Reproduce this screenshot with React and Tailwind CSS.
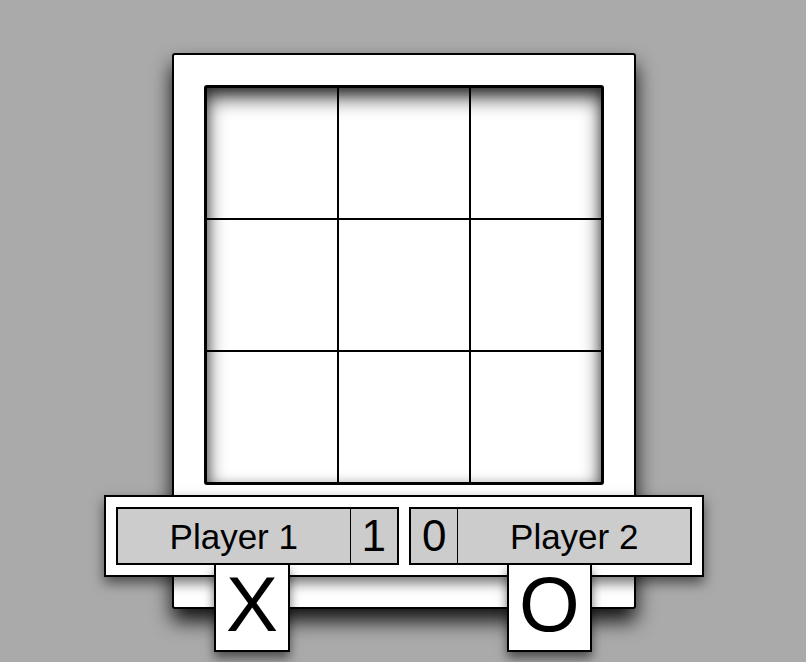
import React from 'react';

const cells = Array.from({ length: 9 });

function PlayerBox({ name, score, mark, scoreFirst }) {
  const scoreCell = (
    <div
      className={
        'flex items-center px-[11px] text-[44px] leading-none border-black ' +
        (scoreFirst ? 'border-r' : 'border-l')
      }
    >
      {score}
    </div>
  );

  return (
    <div className="relative flex-1">
      <div className="relative z-10 flex h-full border-2 border-black bg-[#cccccc]">
        {scoreFirst && scoreCell}
        <div className="flex flex-1 items-center justify-center text-[35px] leading-none">{name}</div>
        {!scoreFirst && scoreCell}
      </div>
      {/* mark tile hangs under the box */}
      <div className="absolute top-full left-[98px] border-2 border-t-0 border-black bg-white px-[10px] pb-[7px] text-[78px] leading-none shadow-[0_6px_10px_rgba(0,0,0,0.55)]">
        {mark}
      </div>
    </div>
  );
}

export default function App() {
  return (
    <div
      className="min-h-screen bg-[#aaaaaa] flex justify-center pl-[2px] pt-[53px] text-black"
      style={{ fontFamily: '"Liberation Sans", Arial, sans-serif' }}
    >
      <div className="w-[464px] h-fit rounded-[3px] border-2 border-black bg-white p-[30px] shadow-[0_12px_20px_rgba(0,0,0,0.9)]">
        {/* board */}
        <div className="grid grid-cols-3 w-[400px] h-[400px] rounded-[3px] border-2 border-black bg-white shadow-[inset_0_10px_20px_rgba(0,0,0,0.8),inset_0_4px_12px_rgba(0,0,0,0.35)]">
          {cells.map((_, i) => (
            <div key={i} className="w-[132px] h-[132px] border border-black" />
          ))}
        </div>

        {/* score bar */}
        <div className="relative mt-[10px] -mx-[100px] flex h-[82px] gap-[10px] border-2 border-black bg-white p-[10px] shadow-[0_6px_12px_rgba(0,0,0,0.55)]">
          <PlayerBox name="Player 1" score="1" mark="X" />
          <PlayerBox name="Player 2" score="0" mark="O" scoreFirst />
        </div>
      </div>
    </div>
  );
}
